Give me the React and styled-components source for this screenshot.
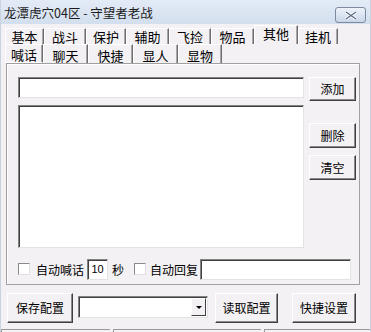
import React from 'react'
import styled, { createGlobalStyle } from 'styled-components'

const Global = createGlobalStyle`
  html, body { margin: 0; padding: 0; background: #f4f1f4; }
  body { font-family: "Noto Sans CJK SC", "Liberation Sans", sans-serif; font-size: 12px; color: #000; }
  * { box-sizing: border-box; }
`

const Window = styled.div`
  width: 371px;
  height: 332px;
  background: #f4f1f4;
  display: flex;
  flex-direction: column;
  overflow: hidden;
  border-left: 1px solid #c9d2de;
  border-right: 1px solid #c9d2de;
`

const TitleBar = styled.div`
  height: 24px;
  flex: none;
  display: flex;
  align-items: flex-start;
  justify-content: space-between;
  padding: 0 4px 0 3px;
  background: linear-gradient(#e3ebf6, #d3dfee);
  color: #1b1b1b;
  font-size: 12.5px;
`

const Title = styled.span`
  line-height: 14px;
  margin-top: 6px;
`

const CloseBtn = styled.div`
  width: 31px;
  height: 16px;
  margin-top: 7px;
  border: 1px solid #7d8aa0;
  border-radius: 3px;
  background: linear-gradient(#eef3fa, #c9d6e8);
  display: flex;
  align-items: center;
  justify-content: center;
`

const TabRow = styled.div`
  display: flex;
  align-items: flex-end;
  height: ${p => p.$h}px;
  padding-left: ${p => p.$pl}px;
  flex: none;
`

const Tab = styled.div`
  width: ${p => p.$w}px;
  height: ${p => (p.$active ? 19 : 16)}px;
  border-top: 1px solid #fff;
  border-left: 1px solid #fff;
  border-right: 1px solid #6e6e6e;
  box-shadow: inset -1px 0 0 #a8a8a8;
  display: flex;
  align-items: center;
  justify-content: center;
  font-size: 13px;
  line-height: 13px;
  padding-bottom: ${p => (p.$active ? 4 : 1)}px;
`

const SubTab = styled(Tab)`
  height: 19px;
  padding-bottom: 0;
  padding-top: 2px;
  border-bottom: ${p => (p.$active ? '1px solid #fff' : 'none')};
`

const Frame = styled.div`
  margin: 0 10px 0 5px;
  height: 222px;
  border: 1px solid #a0a0a0;
  box-shadow: inset 1px 1px 0 #fff;
  padding: 13px 4px 4px 11px;
  display: flex;
  flex-direction: column;
  flex: none;
`

const Main = styled.div`
  display: grid;
  grid-template-columns: 286px 47px;
  column-gap: 5px;
`

const LeftCol = styled.div`
  display: flex;
  flex-direction: column;
  gap: 7px;
`

const RightCol = styled.div`
  display: flex;
  flex-direction: column;
`

const Sunken = styled.div`
  background: #fff;
  border-top: 1px solid #828282;
  border-left: 1px solid #828282;
  border-right: 1px solid #e3e3e3;
  border-bottom: 1px solid #e3e3e3;
  box-shadow: inset 1px 1px 0 #404040;
  height: ${p => p.$h}px;
  width: ${p => (p.$w ? `${p.$w}px` : 'auto')};
`

const Button = styled.div`
  width: ${p => p.$w}px;
  height: ${p => p.$h}px;
  margin-top: ${p => p.$mt || 0}px;
  margin-left: ${p => p.$ml || 0}px;
  background: #f4f1f4;
  border-top: 1px solid #fff;
  border-left: 1px solid #fff;
  border-right: 1px solid #404040;
  border-bottom: 1px solid #404040;
  box-shadow: inset -1px -1px 0 #8a8a8a;
  display: flex;
  align-items: center;
  justify-content: center;
  font-size: 12px;
  line-height: 1;
  flex: none;
`

const Options = styled.div`
  display: flex;
  align-items: center;
  margin-top: 10px;
  height: 22px;
`

const Check = styled.div`
  width: 12px;
  height: 12px;
  margin-right: ${p => p.$mr}px;
  background: #fff;
  border-top: 1px solid #8a8a8a;
  border-left: 1px solid #8a8a8a;
  border-right: 1px solid #e0e0e0;
  border-bottom: 1px solid #e0e0e0;
  flex: none;
`

const Label = styled.span`
  font-size: 12px;
  margin-right: ${p => p.$mr || 0}px;
  white-space: nowrap;
`

const NumBox = styled(Sunken)`
  display: flex;
  align-items: center;
  justify-content: center;
  font-family: "Liberation Sans", sans-serif;
  font-size: 11px;
  margin-right: 4px;
  flex: none;
`

const BottomBar = styled.div`
  display: flex;
  align-items: flex-start;
  padding: 8px 0 0 6px;
  height: 44px;
  flex: none;
`

const Combo = styled(Sunken)`
  display: flex;
  justify-content: flex-end;
  align-items: center;
  padding-right: 1px;
  margin: 3px 7px 0 5px;
  flex: none;
`

const ComboArrow = styled.div`
  width: 15px;
  height: 18px;
  background: #f4f1f4;
  border-top: 1px solid #fff;
  border-left: 1px solid #fff;
  border-right: 1px solid #404040;
  border-bottom: 1px solid #404040;
  display: flex;
  align-items: center;
  justify-content: center;
  &::after {
    content: '';
    border-left: 3px solid transparent;
    border-right: 3px solid transparent;
    border-top: 3px solid #000;
  }
`

const StatusBar = styled.div`
  display: flex;
  gap: 3px;
  height: 10px;
  flex: none;
`

const Pane = styled.div`
  width: ${p => (p.$w ? `${p.$w}px` : 'auto')};
  flex: ${p => (p.$w ? 'none' : 1)};
  border-top: 1px solid #9a9a9a;
  border-left: 1px solid #9a9a9a;
`

const topTabs = [
  ['基本', 39], ['战斗', 42], ['保护', 40], ['辅助', 43],
  ['飞捡', 42], ['物品', 43], ['其他', 44], ['挂机', 40],
]
const subTabs = [['喊话', 38], ['聊天', 45], ['快捷', 45], ['显人', 45], ['显物', 44]]

export default function App() {
  return (
    <Window>
      <Global />
      <TitleBar>
        <Title>龙潭虎穴04区 - 守望者老战</Title>
        <CloseBtn>
          <svg width="12" height="9" viewBox="0 0 12 9">
            <path d="M1 1 L11 8 M11 1 L1 8" stroke="#fff" strokeWidth="3" />
            <path d="M1 1 L11 8 M11 1 L1 8" stroke="#5a6a84" strokeWidth="1.3" />
          </svg>
        </CloseBtn>
      </TitleBar>
      <TabRow $h={20} $pl={4}>
        {topTabs.map(([t, w]) => (
          <Tab key={t} $w={w} $active={t === '其他'}>{t}</Tab>
        ))}
      </TabRow>
      <TabRow $h={19} $pl={4}>
        {subTabs.map(([t, w]) => (
          <SubTab key={t} $w={w} $active={t === '喊话'}>{t}</SubTab>
        ))}
      </TabRow>
      <Frame>
        <Main>
          <LeftCol>
            <Sunken $h={21} />
            <Sunken $h={143} />
          </LeftCol>
          <RightCol>
            <Button $w={47} $h={24}>添加</Button>
            <Button $w={47} $h={25} $mt={22}>删除</Button>
            <Button $w={47} $h={25} $mt={7}>清空</Button>
          </RightCol>
        </Main>
        <Options>
          <Check $mr={6} />
          <Label $mr={3}>自动喊话</Label>
          <NumBox $w={21} $h={21}>10</NumBox>
          <Label $mr={10}>秒</Label>
          <Check $mr={4} />
          <Label $mr={2}>自动回复</Label>
          <Sunken $w={151} $h={21} />
        </Options>
      </Frame>
      <BottomBar>
        <Button $w={66} $h={30}>保存配置</Button>
        <Combo $w={130} $h={22}>
          <ComboArrow />
        </Combo>
        <Button $w={63} $h={30}>读取配置</Button>
        <Button $w={64} $h={30} $ml={14}>快捷设置</Button>
      </BottomBar>
      <StatusBar>
        <Pane $w={109} />
        <Pane $w={148} />
        <Pane />
      </StatusBar>
    </Window>
  )
}
